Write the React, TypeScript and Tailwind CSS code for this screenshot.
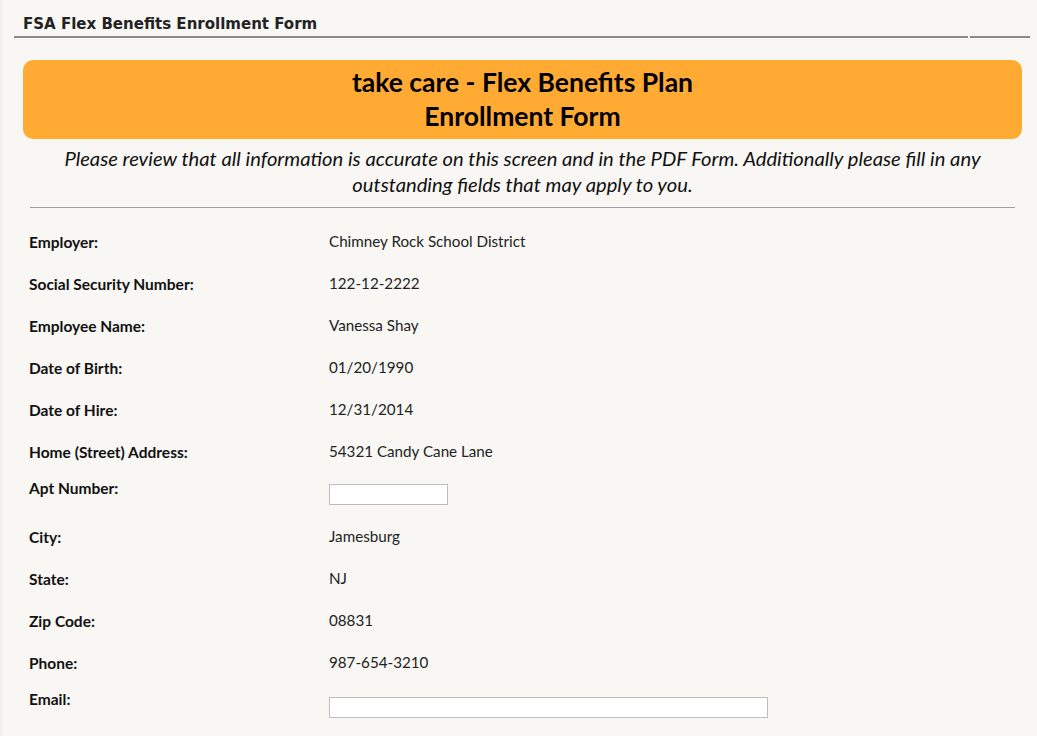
import React from "react";

type Field = {
  label: string;
  value?: string;
  input?: "short" | "long";
};

const fields: Field[] = [
  { label: "Employer:", value: "Chimney Rock School District" },
  { label: "Social Security Number:", value: "122-12-2222" },
  { label: "Employee Name:", value: "Vanessa Shay" },
  { label: "Date of Birth:", value: "01/20/1990" },
  { label: "Date of Hire:", value: "12/31/2014" },
  { label: "Home (Street) Address:", value: "54321 Candy Cane Lane" },
  { label: "Apt Number:", input: "short" },
  { label: "City:", value: "Jamesburg" },
  { label: "State:", value: "NJ" },
  { label: "Zip Code:", value: "08831" },
  { label: "Phone:", value: "987-654-3210" },
  { label: "Email:", input: "long" },
];

// one label/value line of the enrollment form
const FieldRow = ({ field }: { field: Field }) => {
  if (field.input) {
    return (
      <div className="flex h-[43px] pt-[7px]">
        <div className="w-[300px] shrink-0 text-[15.5px] font-bold leading-[18px] text-[#111]">
          {field.label}
        </div>
        <input
          type="text"
          className={
            field.input === "short"
              ? "mt-[5px] h-[21px] w-[119px] border border-[#bdbdbd] bg-white outline-none"
              : "mt-[7px] h-[21px] w-[439px] border border-[#bdbdbd] bg-white outline-none"
          }
        />
      </div>
    );
  }
  return (
    <div className="flex h-[42px] items-center">
      <div className="w-[300px] shrink-0 pt-[1px] text-[15.5px] font-bold leading-[20px] text-[#111]">
        {field.label}
      </div>
      <div className="text-[15.2px] leading-[20px] text-[#222]">{field.value}</div>
    </div>
  );
};

const App: React.FC = (): JSX.Element => {
  return (
    <div
      className="min-h-[736px] w-full overflow-hidden bg-[#f8f7f4] shadow-[inset_4px_0_4px_-3px_rgba(0,0,0,0.06)]"
      style={{ fontFamily: "Lato, 'Noto Sans', sans-serif" }}
    >
      {/* page title */}
      <div className="flex items-end pt-[12px]">
        <div className="ml-[14px] w-[954px] border-b-2 border-[#8a8a8a] pb-[2px] pl-[9px]">
          <h2
            className="text-[16.7px] font-bold leading-[22px] text-[#222]"
            style={{ fontFamily: "'DejaVu Sans Condensed', 'Liberation Sans Narrow', sans-serif" }}
          >
            FSA Flex Benefits Enrollment Form
          </h2>
        </div>
        <div className="ml-[2px] w-[60px] border-b-2 border-[#8a8a8a]" />
      </div>

      <div className="pl-[23px] pr-[15px] pt-[22px]">
        {/* plan banner */}
        <div className="rounded-[10px] bg-[#ffaa33] pb-[6px] pt-[5px] text-center text-[26.5px] font-bold leading-[34px] text-black">
          <div>take care - Flex Benefits Plan</div>
          <div>Enrollment Form</div>
        </div>

        <p className="mt-[6px] px-[20px] text-center text-[20.2px] italic leading-[26px] text-[#111]">
          Please review that all information is accurate on this screen and in the PDF Form. Additionally please fill in any
          outstanding fields that may apply to you.
        </p>

        <hr className="ml-[7px] mr-[7px] mt-[10px] border-t border-[#a0a0a0]" />

        <div className="mt-[12px] pl-[6px]">
          {fields.map((f) => (
            <FieldRow key={f.label} field={f} />
          ))}
        </div>
      </div>
    </div>
  );
};

export default App;
